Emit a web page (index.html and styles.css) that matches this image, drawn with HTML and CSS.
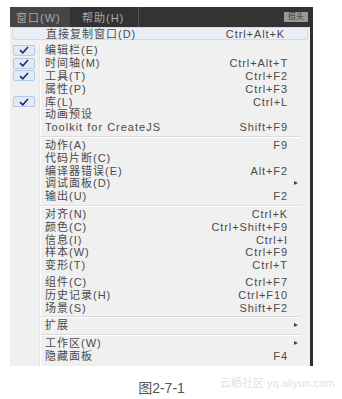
FILE: index.html
```html
<!DOCTYPE html>
<html>
<head>
<meta charset="utf-8">
<link rel="stylesheet" href="styles.css">
</head>
<body>
<div class="page">
  <div class="shot">
    <div class="menubar">
      <span class="mb-item active">窗口(W)</span>
      <span class="mb-item">帮助(H)</span>
      <span class="mb-sep"></span>
      <span class="mb-spacer"></span>
      <span class="mb-btn">搭头</span>
    </div>
    <div class="menu">
      <div class="row hl"><span class="chk"></span><span class="lbl">直接复制窗口(D)</span><span class="key">Ctrl+Alt+K</span><span class="sub"></span></div>
      <div class="gap"></div>
      <div class="row"><span class="chk on"><svg viewBox="0 0 10 8" width="10" height="8"><path d="M1 4.2 L3.8 6.8 L9 1" fill="none" stroke="#1c2b6e" stroke-width="1.6"/></svg></span><span class="lbl">编辑栏(E)</span><span class="key"></span><span class="sub"></span></div>
      <div class="row"><span class="chk on"><svg viewBox="0 0 10 8" width="10" height="8"><path d="M1 4.2 L3.8 6.8 L9 1" fill="none" stroke="#1c2b6e" stroke-width="1.6"/></svg></span><span class="lbl">时间轴(M)</span><span class="key">Ctrl+Alt+T</span><span class="sub"></span></div>
      <div class="row"><span class="chk on"><svg viewBox="0 0 10 8" width="10" height="8"><path d="M1 4.2 L3.8 6.8 L9 1" fill="none" stroke="#1c2b6e" stroke-width="1.6"/></svg></span><span class="lbl">工具(T)</span><span class="key">Ctrl+F2</span><span class="sub"></span></div>
      <div class="row"><span class="chk"></span><span class="lbl">属性(P)</span><span class="key">Ctrl+F3</span><span class="sub"></span></div>
      <div class="row"><span class="chk on"><svg viewBox="0 0 10 8" width="10" height="8"><path d="M1 4.2 L3.8 6.8 L9 1" fill="none" stroke="#1c2b6e" stroke-width="1.6"/></svg></span><span class="lbl">库(L)</span><span class="key">Ctrl+L</span><span class="sub"></span></div>
      <div class="row"><span class="chk"></span><span class="lbl">动画预设</span><span class="key"></span><span class="sub"></span></div>
      <div class="row"><span class="chk"></span><span class="lbl">Toolkit for CreateJS</span><span class="key">Shift+F9</span><span class="sub"></span></div>
      <div class="sep"></div>
      <div class="row"><span class="chk"></span><span class="lbl">动作(A)</span><span class="key">F9</span><span class="sub"></span></div>
      <div class="row"><span class="chk"></span><span class="lbl">代码片断(C)</span><span class="key"></span><span class="sub"></span></div>
      <div class="row"><span class="chk"></span><span class="lbl">编译器错误(E)</span><span class="key">Alt+F2</span><span class="sub"></span></div>
      <div class="row"><span class="chk"></span><span class="lbl">调试面板(D)</span><span class="key"></span><span class="sub"><i class="arrow"></i></span></div>
      <div class="row"><span class="chk"></span><span class="lbl">输出(U)</span><span class="key">F2</span><span class="sub"></span></div>
      <div class="sep"></div>
      <div class="row"><span class="chk"></span><span class="lbl">对齐(N)</span><span class="key">Ctrl+K</span><span class="sub"></span></div>
      <div class="row"><span class="chk"></span><span class="lbl">颜色(C)</span><span class="key">Ctrl+Shift+F9</span><span class="sub"></span></div>
      <div class="row"><span class="chk"></span><span class="lbl">信息(I)</span><span class="key">Ctrl+I</span><span class="sub"></span></div>
      <div class="row"><span class="chk"></span><span class="lbl">样本(W)</span><span class="key">Ctrl+F9</span><span class="sub"></span></div>
      <div class="row"><span class="chk"></span><span class="lbl">变形(T)</span><span class="key">Ctrl+T</span><span class="sub"></span></div>
      <div class="gap"></div>
      <div class="row"><span class="chk"></span><span class="lbl">组件(C)</span><span class="key">Ctrl+F7</span><span class="sub"></span></div>
      <div class="row"><span class="chk"></span><span class="lbl">历史记录(H)</span><span class="key">Ctrl+F10</span><span class="sub"></span></div>
      <div class="row"><span class="chk"></span><span class="lbl">场景(S)</span><span class="key">Shift+F2</span><span class="sub"></span></div>
      <div class="sep"></div>
      <div class="row"><span class="chk"></span><span class="lbl">扩展</span><span class="key"></span><span class="sub"><i class="arrow"></i></span></div>
      <div class="sep"></div>
      <div class="row"><span class="chk"></span><span class="lbl">工作区(W)</span><span class="key"></span><span class="sub"><i class="arrow"></i></span></div>
      <div class="row"><span class="chk"></span><span class="lbl">隐藏面板</span><span class="key">F4</span><span class="sub"></span></div>
    </div>
  </div>
  <div class="caption">图2-7-1</div>
  <div class="watermark">云栖社区 yq.aliyun.com</div>
</div>
</body>
</html>
```

FILE: styles.css
```css
* { box-sizing: border-box; }
html, body { margin: 0; padding: 0; background: #fff; }
body { font-family: "Liberation Sans", "Noto Sans CJK SC", sans-serif; }

.page {
  position: relative;
  width: 342px;
  padding-top: 7px;
}

.shot {
  margin-left: 10px;
  width: 303px;
  background: #2f2f2f;
  padding-right: 3px;
}

.menubar {
  height: 20px;
  display: flex;
  align-items: stretch;
  background: #333;
  font-size: 11px;
  letter-spacing: 1px;
  color: #a8a8a8;
}
.mb-item {
  display: flex;
  align-items: center;
  padding: 0 6px;
}
.mb-item.active {
  width: 60px;
  background: #454545;
}
.mb-item + .mb-item { padding-left: 12px; }
.mb-sep {
  width: 1px;
  margin-left: 8px;
  background: #555;
}
.mb-spacer { flex: 1; }
.mb-btn {
  align-self: center;
  width: 24px;
  height: 10px;
  margin-right: 2px;
  background: #9a9a9a;
  color: #3a3a3a;
  font-size: 8px;
  letter-spacing: 0;
  line-height: 10px;
  text-align: center;
  border-radius: 1px;
}

.menu {
  background: #f0f0f0;
  padding-bottom: 4px;
  font-size: 11px;
  letter-spacing: 1px;
  color: #4a4a4a;
  background-image: linear-gradient(to right, transparent 29px, #e4e5e5 29px, #e4e5e5 30px, #fff 30px, #fff 31px, transparent 31px);
  background-repeat: no-repeat;
  background-position: 0 17px;
}

.row {
  display: grid;
  grid-template-columns: 22px 1fr auto 22px;
  align-items: center;
  height: 12.8px;
  padding-left: 3px;
  line-height: 12px;
  white-space: nowrap;
}
.lbl { padding-left: 10px; }
.key { text-align: right; letter-spacing: 0.9px; }

.row.hl {
  margin: 0 2px;
  padding-left: 1px;
  height: 13px;
  background: #eaeff5;
  border: 1px solid #d2dbe7;
  border-radius: 2px;
}
.row.hl .sub { width: 20px; }

.chk {
  height: 11px;
  display: flex;
  align-items: center;
  justify-content: center;
}
.chk.on {
  background: #e2eaf6;
  border: 1px solid #b3c9e8;
  border-radius: 2px;
}

.sub { position: relative; height: 12px; }
.arrow {
  position: absolute;
  left: 6px;
  top: 4px;
  width: 0;
  height: 0;
  border-top: 2.5px solid transparent;
  border-bottom: 2.5px solid transparent;
  border-left: 4px solid #444;
}

.gap { height: 4px; }
.sep {
  height: 5px;
  display: flex;
  align-items: center;
  padding-left: 30px;
  padding-right: 9px;
}
.sep::before {
  content: "";
  display: block;
  flex: 1;
  height: 1px;
  background: #dcdcdc;
  box-shadow: 0 1px 0 #fff;
}

.caption {
  margin-left: 10px;
  width: 303px;
  margin-top: 15px;
  text-align: center;
  font-size: 14px;
  line-height: 15px;
  color: #555;
}

.watermark {
  position: absolute;
  left: 220px;
  top: 377px;
  font-size: 11px;
  line-height: 13px;
  color: #e2e2e2;
  white-space: nowrap;
}
```
